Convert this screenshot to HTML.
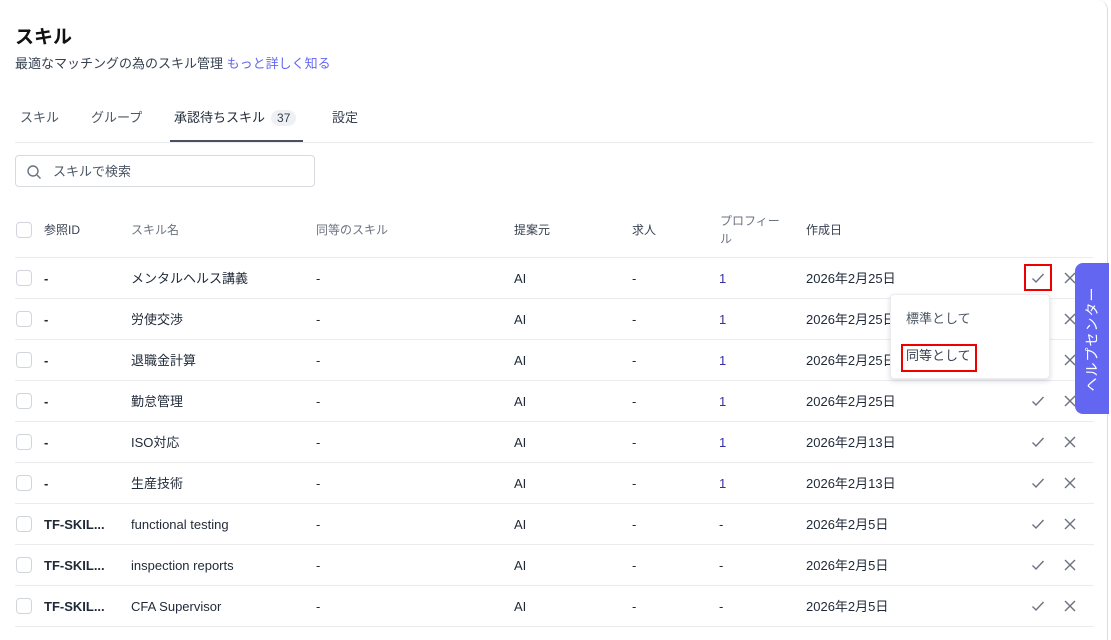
<!DOCTYPE html>
<html><head><meta charset="utf-8"><style>
*{box-sizing:border-box;margin:0;padding:0}
body{width:1111px;height:629px;overflow:hidden;background:#fff;font-family:"Liberation Sans","Noto Sans CJK JP",sans-serif;color:#1f2937;position:relative}
.card{position:absolute;left:0;top:0;width:1108px;height:640px;background:#fff;border-right:1px solid #ddd9e6;border-top-right-radius:10px}
.abs{position:absolute;white-space:nowrap;line-height:16px}
h1{position:absolute;left:15px;top:26px;font-size:19px;font-weight:700;color:#111;line-height:24px}
.sub{left:15px;top:56px;font-size:13px;color:#374151}
.sub a{color:#6366f1;text-decoration:none}
.tab{top:110px;font-size:13px;color:#4b5563}
.badge{display:inline-block;background:#eef0f4;border-radius:9px;padding:0 6px;font-size:12px;color:#374151;margin-left:6px;line-height:16px}
.line{position:absolute;left:15px;width:1079px;height:1px;background:#ebecf0}
.search{position:absolute;left:15px;top:155px;width:300px;height:32px;border:1px solid #d6d9de;border-radius:4px}
.cb{position:absolute;left:16px;width:16px;height:16px;border:1px solid #d1d5db;border-radius:4px;background:#fff}
.th{font-size:12px;color:#6b7280}
.td{font-size:13px;color:#1f2937}
.blue{color:#3730a3}
.ic{position:absolute}
</style></head><body>
<div class="card"></div>
<h1>スキル</h1>
<div class="abs sub">最適なマッチングの為のスキル管理 <a>もっと詳しく知る</a></div>
<div class="abs tab" style="left:20px">スキル</div>
<div class="abs tab" style="left:91px">グループ</div>
<div class="abs tab" style="left:174px;color:#1f2937">承認待ちスキル<span class="badge">37</span></div>
<div class="abs tab" style="left:332px;color:#374151">設定</div>
<div class="line" style="top:142px"></div>
<div style="position:absolute;left:170px;top:140px;width:133px;height:2px;background:#4b5060"></div>
<div class="search">
<svg class="ic" style="left:10px;top:8px" width="16" height="16" viewBox="0 0 16 16" fill="none" stroke="#6b7280" stroke-width="1.4"><circle cx="7" cy="7" r="5"/><path d="M11 11l3.5 3.5"/></svg>
<div class="abs" style="left:37px;top:8px;font-size:13px;color:#4b5563">スキルで検索</div>
</div>
<div class="cb" style="top:222px"></div>
<div class="abs th" style="left:44px;top:222px;color:#374151">参照ID</div>
<div class="abs th" style="left:131px;top:222px">スキル名</div>
<div class="abs th" style="left:316px;top:222px">同等のスキル</div>
<div class="abs th" style="left:514px;top:222px;color:#374151">提案元</div>
<div class="abs th" style="left:632px;top:222px;color:#374151">求人</div>
<div class="abs th" style="left:720px;top:212px;line-height:18px;white-space:normal;width:62px">プロフィー<br>ル</div>
<div class="abs th" style="left:806px;top:222px;color:#374151">作成日</div>
<div class="line" style="top:257px"></div>

<div id="rows"></div>
<script>
var d=[["-","メンタルヘルス講義","1","2026年2月25日"],["-","労使交渉","1","2026年2月25日"],["-","退職金計算","1","2026年2月25日"],["-","勤怠管理","1","2026年2月25日"],["-","ISO対応","1","2026年2月13日"],["-","生産技術","1","2026年2月13日"],["TF-SKIL...","functional testing","-","2026年2月5日"],["TF-SKIL...","inspection reports","-","2026年2月5日"],["TF-SKIL...","CFA Supervisor","-","2026年2月5日"]];
var h="";
d.forEach(function(r,i){var y=258+i*41,c=y+20,t=c-7;
h+='<div class="cb" style="top:'+(c-8)+'px"></div>';
h+='<div class="abs td" style="left:44px;top:'+t+'px;font-weight:700">'+r[0]+'</div>';
h+='<div class="abs td" style="left:131px;top:'+t+'px">'+r[1]+'</div>';
h+='<div class="abs td" style="left:316px;top:'+t+'px">-</div>';
h+='<div class="abs td" style="left:514px;top:'+t+'px">AI</div>';
h+='<div class="abs td" style="left:632px;top:'+t+'px">-</div>';
h+='<div class="abs td '+(r[2]=="1"?"blue":"")+'" style="left:719px;top:'+t+'px">'+r[2]+'</div>';
h+='<div class="abs td" style="left:806px;top:'+t+'px">'+r[3]+'</div>';
h+='<svg class="ic" style="left:1031px;top:'+(c-7)+'px" width="14" height="14" viewBox="0 0 14 14" fill="none" stroke="#6b7280" stroke-width="1.4"><path d="M1.5 7.5l3.5 3.5 7.5-8"/></svg>';
h+='<svg class="ic" style="left:1064px;top:'+(c-6)+'px" width="12" height="12" viewBox="0 0 12 12" fill="none" stroke="#6b7280" stroke-width="1.4"><path d="M1 1l10 10M11 1L1 11"/></svg>';
h+='<div class="line" style="top:'+(y+40)+'px"></div>';});
document.getElementById("rows").innerHTML=h;
</script>
<div style="position:absolute;left:1024px;top:264px;width:28px;height:27px;border:2px solid #e00"></div>
<div style="position:absolute;left:890px;top:294px;width:160px;height:85px;background:#fff;border:1px solid #ececf0;border-radius:4px;box-shadow:0 2px 6px rgba(0,0,0,.15)"></div>
<div class="abs" style="left:906px;top:311px;font-size:13px;color:#4b5563">標準として</div>
<div class="abs" style="left:906px;top:348px;font-size:13px;color:#374151">同等として</div>
<div style="position:absolute;left:901px;top:344px;width:76px;height:28px;border:2px solid #e00"></div>
<div style="position:absolute;left:1075px;top:263px;width:34px;height:151px;background:#6366f1;border-radius:8px 0 0 8px"></div>
<div class="abs" style="left:1034px;top:330px;width:116px;text-align:center;transform:rotate(-90deg);font-size:14px;color:#fff;line-height:18px;letter-spacing:1px">ヘルプセンター</div>
</body></html>
